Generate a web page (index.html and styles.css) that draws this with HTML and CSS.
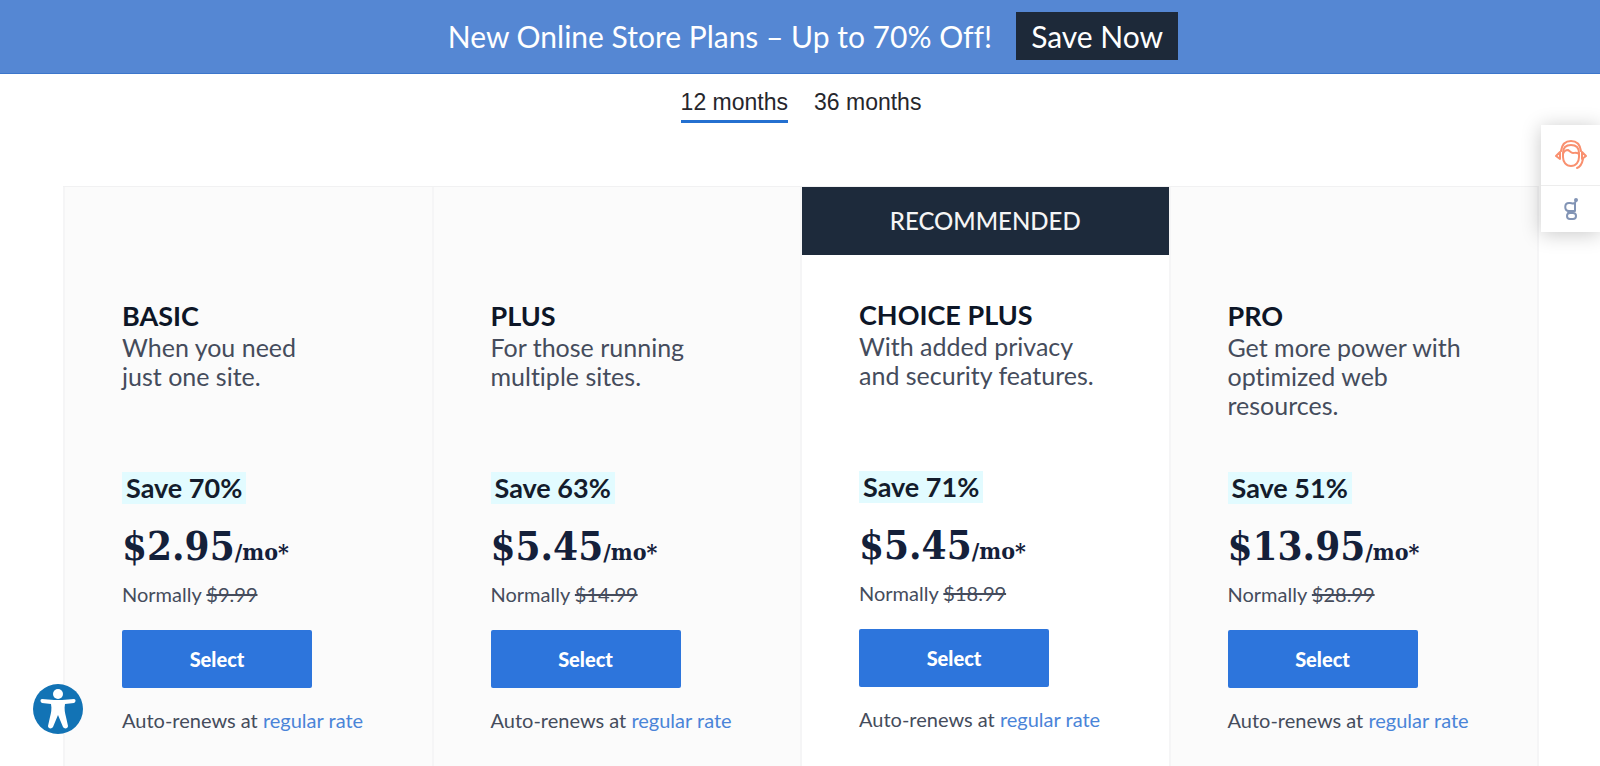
FILE: index.html
```html
<!DOCTYPE html>
<html lang="en">
<head>
  <meta charset="utf-8">
  <title>Hosting Plans</title>
  <meta name="viewport" content="width=device-width, initial-scale=1">
  <link rel="stylesheet" href="styles.css">
</head>
<body>
  <header class="banner">
    <span class="banner-text">New Online Store Plans – Up to 70% Off!</span>
    <a class="banner-btn" href="#">Save Now</a>
  </header>

  <nav class="terms">
    <button class="term active" type="button">12 months</button>
    <button class="term" type="button">36 months</button>
  </nav>

  <main class="plans">
    <section class="plan">
      <div class="plan-body">
        <h2>BASIC</h2>
        <p class="desc">When you need<br>just one site.</p>
        <span class="save">Save 70%</span>
        <p class="price">$2.95<span class="per">/mo*</span></p>
        <p class="normal">Normally <s>$9.99</s></p>
        <button class="select" type="button">Select</button>
        <p class="renew">Auto-renews at <a href="#">regular rate</a></p>
      </div>
    </section>
    <section class="plan">
      <div class="plan-body">
        <h2>PLUS</h2>
        <p class="desc">For those running<br>multiple sites.</p>
        <span class="save">Save 63%</span>
        <p class="price">$5.45<span class="per">/mo*</span></p>
        <p class="normal">Normally <s>$14.99</s></p>
        <button class="select" type="button">Select</button>
        <p class="renew">Auto-renews at <a href="#">regular rate</a></p>
      </div>
    </section>
    <section class="plan recommended">
      <div class="ribbon">RECOMMENDED</div>
      <div class="plan-body">
        <h2>CHOICE PLUS</h2>
        <p class="desc">With added privacy<br>and security features.</p>
        <span class="save">Save 71%</span>
        <p class="price">$5.45<span class="per">/mo*</span></p>
        <p class="normal">Normally <s>$18.99</s></p>
        <button class="select" type="button">Select</button>
        <p class="renew">Auto-renews at <a href="#">regular rate</a></p>
      </div>
    </section>
    <section class="plan">
      <div class="plan-body">
        <h2>PRO</h2>
        <p class="desc">Get more power with<br>optimized web<br>resources.</p>
        <span class="save">Save 51%</span>
        <p class="price">$13.95<span class="per">/mo*</span></p>
        <p class="normal">Normally <s>$28.99</s></p>
        <button class="select" type="button">Select</button>
        <p class="renew">Auto-renews at <a href="#">regular rate</a></p>
      </div>
    </section>
  </main>

  <aside class="rail">
    <button class="rail-btn" type="button" aria-label="Support">
      <svg width="34" height="34" viewBox="0 0 34 34" fill="none" stroke="#f9906f" stroke-width="2" stroke-linecap="round" stroke-linejoin="round">
        <path d="M7 13C8 6 12 3 17 3s9 3 10 10"/>
        <path d="M9 15c0-5 3-8 8-8s8 3 8 8v4c0 5-3 9-8 9s-8-4-8-9z"/>
        <path d="M9 16c1-3 3-4 5-4 2 1 3 3 5 3s3-1 6 1"/>
        <path d="M6 14l-4 4 4 3zM28 14l4 4-4 3z"/>
        <path d="M29 21c-1 5-3 8-6 9"/>
      </svg>
    </button>
    <button class="rail-btn small" type="button" aria-label="Integrations">
      <svg width="16" height="24" viewBox="0 0 16 24" fill="none" stroke="#8294b5" stroke-width="2" stroke-linecap="round" stroke-linejoin="round">
        <path d="M12 6v8H6c-5 0-5-8 0-8h1c2 0 2 1 5 0l1-3"/>
        <path d="M6 14c-1 1-1 2 0 2"/>
        <rect x="4" y="16" width="9" height="6" rx="3"/>
        <circle cx="13" cy="3" r="1"/>
      </svg>
    </button>
  </aside>

  <button class="access" type="button" aria-label="Accessibility">
    <svg width="52" height="52" viewBox="0 0 52 52">
      <circle cx="26" cy="26" r="25" fill="#1273b5"/>
      <circle cx="26" cy="11" r="5" fill="#fff"/>
      <path fill="#fff" d="M10 16l12 1h8l12-1c2 0 2 3 0 4l-9 1c-1 5 0 9 1 13l2 9c0 3-4 3-5 1l-5-12-5 12c-1 2-5 2-5-1l2-9c1-4 2-8 1-13l-9-1c-2-1-2-4 0-4z"/>
    </svg>
  </button>
</body>
</html>
```

FILE: styles.css
```css
* { box-sizing:border-box; }
body { margin:0; min-height:100vh; display:flex; flex-direction:column; background:#fff;
       font-family:Lato,sans-serif; font-variant-ligatures:none; color:#454c5c; }
button { font-family:inherit; border:0; padding:0; background:none; cursor:pointer; }
h2, p { margin:0; }
a { text-decoration:none; }

.banner { display:flex; justify-content:center; align-items:center; gap:24px;
          padding:12px 0 13px 26px; background:#5587d3; border-bottom:1px solid #3c76cb; color:#fff; }
.banner-text { font-size:30px; line-height:48px; }
.banner-btn { padding:0 15px; background:#1d2939; color:#fff; font-size:30px; line-height:48px; }

.terms { display:flex; justify-content:center; gap:26px; padding:13px 0 63px 2px; }
.term { padding-bottom:3px; border-bottom:3px solid transparent; color:#26262c;
        font:23px/30px 'Liberation Sans',sans-serif; }
.term.active { border-color:#2470d0; }

.plans { flex:1; display:grid; grid-template-columns:repeat(4,1fr); margin:0 61px 0 63px;
         border-top:1px solid #f1f1f2; border-right:2px solid #f5f5f6; }
.plan { background:#fbfbfb; border-left:2px solid #f5f5f6; padding-top:69px; }
.recommended { background:#fff; padding-top:0; }
.ribbon { background:#1d2a3b; color:#f5f5f5; font-size:24px; line-height:68px;
          font-weight:500; text-align:center; }
.plan-body { padding:44px 16px 30px 57px; }
h2 { color:#0d1627; font-size:27px; line-height:32px; font-weight:700; }
.desc { min-height:90px; margin-bottom:50px; font-size:25px; line-height:29px; padding-top:1px; }
.save { display:inline-block; padding:0 4px; background:#e2fbff; color:#141c2c;
        font-size:27px; line-height:32px; font-weight:700; }
.price { margin-top:18px; color:#14203a; font:bold 40px/48px 'DejaVu Serif Condensed','Liberation Serif',serif; }
.per { font-size:23px; }
.normal { margin-top:4px; font-size:20px; line-height:28px; }
.select { display:block; width:190px; margin:22px 0 18px; border-radius:2px;
          background:#2d75dc; color:#fff; font-size:20px; line-height:58px; font-weight:900; }
.renew { font-size:20px; line-height:28px; }
.renew a { color:#4a84d8; }

/* floating widgets */
.rail { position:fixed; top:125px; right:0; width:59px; background:#fff;
        box-shadow:0 2px 20px rgba(0,0,0,0.22); }
.rail-btn { display:flex; justify-content:center; align-items:center; width:100%; height:60px; }
.rail-btn.small { height:47px; border-top:1px solid #ededed; }
.access { position:fixed; left:32px; bottom:31px; width:52px; height:52px; }
.access svg { display:block; }
```
